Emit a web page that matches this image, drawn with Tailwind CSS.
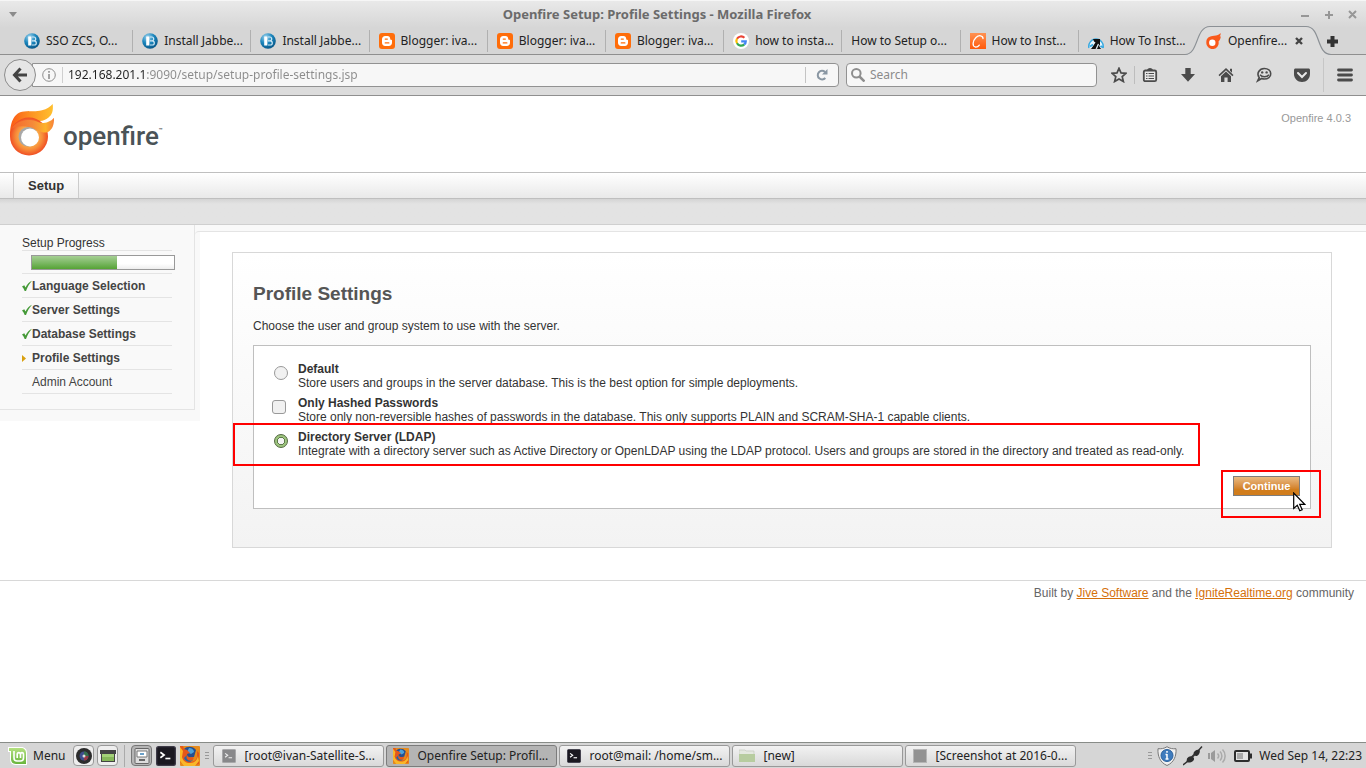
<!DOCTYPE html>
<html lang="en">
<head>
    <meta charset="UTF-8" />
    <meta name="viewport" content="width=device-width, initial-scale=1.0" />
    <title>Openfire Setup: Profile Settings</title>
    <script src="https://cdn.jsdelivr.net/npm/@tailwindcss/browser@4"></script>
</head>
<body class="min-h-screen flex flex-col bg-white font-['Noto_Sans',sans-serif] text-[12px] text-[#222] overflow-x-hidden">

    <!-- Shared icons -->
    <svg class="absolute size-0" aria-hidden="true">
        <defs>
            <radialGradient id="gBlue" cx=".35" cy=".25" r=".8"><stop offset="0" stop-color="#9fd4ee"/><stop offset=".5" stop-color="#1b86bd"/><stop offset="1" stop-color="#075485"/></radialGradient>
            <linearGradient id="gOrange" x1="0" y1="0" x2="0" y2="1"><stop offset="0" stop-color="#ff9252"/><stop offset="1" stop-color="#ff5a0a"/></linearGradient>
            <linearGradient id="gFlame" x1="0" y1="0" x2="1" y2="0"><stop offset="0" stop-color="#fb5a16"/><stop offset=".5" stop-color="#fd9422"/><stop offset="1" stop-color="#ffc02e"/></linearGradient>
            <linearGradient id="gFlame2" x1="0" y1="0" x2="1" y2="0"><stop offset="0" stop-color="#f4692a"/><stop offset=".5" stop-color="#f58a3a"/><stop offset=".8" stop-color="#fdb32c"/><stop offset="1" stop-color="#f7803a"/></linearGradient>
            <radialGradient id="gBall" cx=".5" cy=".5" r=".5"><stop offset=".45" stop-color="#fbb04c"/><stop offset=".7" stop-color="#f78c3a"/><stop offset="1" stop-color="#f04e23"/></radialGradient>
            <linearGradient id="gMint" x1="0" y1="0" x2="0" y2="1"><stop offset="0" stop-color="#b4e080"/><stop offset="1" stop-color="#69b53c"/></linearGradient>
        </defs>
        <symbol id="ico-b" viewBox="0 0 16 16"><circle cx="8" cy="8" r="7.8" fill="url(#gBlue)"/><path d="M4.2 3.500h3.200v9H4.200z" fill="#fff"/><path d="M8 4h1.800a1.800 1.800 0 0 1 0 3.800H8M8 7.800h2.200a2 2 0 0 1 0 4.200H8" fill="none" stroke="#cfe8f5" stroke-width="1.200"/></symbol>
        <symbol id="ico-blogger" viewBox="0 0 16 16"><rect width="16" height="16" rx="3" fill="#ff6d0a"/><path d="M6.200 3h2.200c1.800 0 2.800 1.200 2.800 2.700 0 .8.3 1.100 1 1.100.6 0 .8.3.8.8v2.200c0 1.900-1.200 3.200-3.200 3.200H6.200C4.300 13 3 11.700 3 9.800V6.200C3 4.300 4.300 3 6.200 3z" fill="#fff"/><path d="M6.300 6.100h2M6.300 9.900h3.500" stroke="#ff6d0a" stroke-width="1.400" stroke-linecap="round"/></symbol>
        <symbol id="ico-google" viewBox="0 0 16 16"><circle cx="8" cy="8" r="8" fill="#fff"/><g fill="none" stroke-width="2.200"><path d="M4 5.800A4.700 4.700 0 0 1 11.400 4.800" stroke="#ea4335"/><path d="M4.100 10.500A4.700 4.700 0 0 1 4 5.600" stroke="#fbbc05"/><path d="M11.300 11.400A4.700 4.700 0 0 1 4 10.300" stroke="#34a853"/><path d="M8.200 8.300h4.600c0 1.400-.6 2.500-1.500 3.200" stroke="#4285f4"/></g></symbol>
        <symbol id="ico-swirl" viewBox="0 0 16 16"><rect width="16" height="16" fill="url(#gOrange)"/><path d="M13 5.500C13 2.500 9 1.600 6 4.500 2.500 8 2 13.500 5.500 14c1.700.2 3-.8 3.800-1.900" fill="none" stroke="#fff" stroke-width="1.300" stroke-linecap="round"/></symbol>
        <symbol id="ico-howto" viewBox="0 0 16 16"><path d="M1 15A7.200 7.200 0 1 1 15 15" fill="#e8f6fd" stroke="#35a8e0" stroke-width="1.500"/><path d="M5 6h7v7l-2-2.500L7.500 16H3l4.500-6.500L6 8.500zM10.500 12l2.500 4h-4z" fill="#111"/><path d="M2 13.500l3-2M12.500 13l2.500 1.500" stroke="#35a8e0" stroke-width="2"/></symbol>
        <symbol id="ico-fire" viewBox="0 0 16 16"><path d="M.3 9.500C.3 4.500 4 3 8 2.800c3-.1 5-1 6.500-2.800.3 2.200-.3 3-1 3.600.6 0 .9-.2 1.300-.4-.2 2.500-1 4-2.300 5.200A6.200 6.200 0 1 1 .3 9.500z" fill="#f9591b"/><circle cx="6.300" cy="9.700" r="3.200" fill="#fff"/></symbol>
        <symbol id="ico-term" viewBox="0 0 16 16"><rect x=".5" y=".5" width="15" height="15" rx="1.500" fill="#1a1820" stroke="#3d3a47"/><path d="M3.500 5l3 2.200-3 2.200" fill="none" stroke="#fff" stroke-width="1.300"/><path d="M7.500 10h4" stroke="#fff" stroke-width="1.300"/></symbol>
        <symbol id="ico-term-dim" viewBox="0 0 16 16"><rect x=".5" y=".5" width="15" height="15" rx="1" fill="#88888a" stroke="#a5a5a7"/><path d="M3.500 5l3 2.200-3 2.200M7.500 10h4" fill="none" stroke="#eee" stroke-width="1.300"/></symbol>
        <symbol id="ico-firefox" viewBox="0 0 20 20"><rect width="20" height="20" rx="1" fill="#e58a1b"/><path d="M4 3c3-3 9-3 12 1l-2 7-8 1z" fill="#254f91"/><path d="M9 2c3 0 5 2 5 4l-3 2-4-2z" fill="#4da2d9"/><path d="M0 0h3l1 3 3 1 3 3-3 1c0 3 3 4 6 3 2 2-1 4-4 4 4 2 8-1 8-5V5l2 2v11l-6 2H5l-5-4z" fill="#e4571a"/><path d="M0 1l3 4-1 6c1 4 4 6 8 6 5 0 7-3 8-7l1 5-4 5H4L0 15z" fill="#f9b728"/><path d="M7 9c-2 4 2 7 6 5-2 3-8 2-9-2z" fill="#1f64aa"/></symbol>
    </svg>

    <!-- Window title bar -->
    <header class="h-7 shrink-0 flex items-center px-2 bg-linear-to-b from-[#e9e9e9] to-[#d6d6d6] border-t border-[#f6f6f6]">
        <svg class="w-10 h-2" viewBox="0 0 40 8"><path d="M1 1h8l-4 5z" fill="#8b8b8b"/></svg>
        <div class="flex-1 text-center font-bold text-[13px] text-[#6b6b6b] pr-8">Openfire Setup: Profile Settings - Mozilla Firefox</div>
        <svg class="w-15 h-3" viewBox="0 0 60 12" fill="none" stroke="#979797" stroke-width="2"><path d="M3 7h8M27 6h8M31 2v8M51 2l7 7M58 2l-7 7"/></svg>
    </header>

    <!-- Tabs -->
    <nav class="h-[27px] shrink-0 flex pl-[15px] pr-[51px] bg-[#d6d6d6] border-b border-[#8f8f8f] relative whitespace-nowrap">
        <a href="#" class="flex-1 min-w-0 flex items-center gap-[6px] pl-[9px]"><svg class="size-4 shrink-0"><use href="#ico-b"/></svg><span class="flex-1">SSO ZCS, O...</span><i class="w-px h-[22px] bg-[#b0b0b0]"></i></a>
        <a href="#" class="flex-1 min-w-0 flex items-center gap-[6px] pl-[9px]"><svg class="size-4 shrink-0"><use href="#ico-b"/></svg><span class="flex-1">Install Jabbe...</span><i class="w-px h-[22px] bg-[#b0b0b0]"></i></a>
        <a href="#" class="flex-1 min-w-0 flex items-center gap-[6px] pl-[9px]"><svg class="size-4 shrink-0"><use href="#ico-b"/></svg><span class="flex-1">Install Jabbe...</span><i class="w-px h-[22px] bg-[#b0b0b0]"></i></a>
        <a href="#" class="flex-1 min-w-0 flex items-center gap-[6px] pl-[9px]"><svg class="size-4 shrink-0"><use href="#ico-blogger"/></svg><span class="flex-1">Blogger: iva...</span><i class="w-px h-[22px] bg-[#b0b0b0]"></i></a>
        <a href="#" class="flex-1 min-w-0 flex items-center gap-[6px] pl-[9px]"><svg class="size-4 shrink-0"><use href="#ico-blogger"/></svg><span class="flex-1">Blogger: iva...</span><i class="w-px h-[22px] bg-[#b0b0b0]"></i></a>
        <a href="#" class="flex-1 min-w-0 flex items-center gap-[6px] pl-[9px]"><svg class="size-4 shrink-0"><use href="#ico-blogger"/></svg><span class="flex-1">Blogger: iva...</span><i class="w-px h-[22px] bg-[#b0b0b0]"></i></a>
        <a href="#" class="flex-1 min-w-0 flex items-center gap-[6px] pl-[9px]"><svg class="size-4 shrink-0"><use href="#ico-google"/></svg><span class="flex-1">how to insta...</span><i class="w-px h-[22px] bg-[#b0b0b0]"></i></a>
        <a href="#" class="flex-1 min-w-0 flex items-center gap-[6px] pl-[9px]"><span class="flex-1">How to Setup o...</span><i class="w-px h-[22px] bg-[#b0b0b0]"></i></a>
        <a href="#" class="flex-1 min-w-0 flex items-center gap-[6px] pl-[9px]"><svg class="size-4 shrink-0"><use href="#ico-swirl"/></svg><span class="flex-1">How to Inst...</span><i class="w-px h-[22px] bg-[#b0b0b0]"></i></a>
        <a href="#" class="flex-1 min-w-0 flex items-center gap-[6px] pl-[9px]"><svg class="size-4 shrink-0"><use href="#ico-howto"/></svg><span class="flex-1">How To Inst...</span></a>
        <a href="#" class="flex-1 min-w-0 flex items-center gap-[6px] pl-[9px] relative">
            <svg class="absolute -left-3 -top-[3px] w-[146px] h-[31px] max-w-none" viewBox="0 0 146 31"><path d="M0 29.500C14 29.500 10 1.500 25 1.500h96c15 0 10 28 25 28V31H0z" fill="#dcdcdc"/><path d="M0 29.500C14 29.500 10 1.500 25 1.500h96c15 0 10 28 25 28" fill="none" stroke="#8b9095" stroke-width="1.200"/></svg>
            <svg class="size-4 shrink-0 relative"><use href="#ico-fire"/></svg>
            <span class="flex-1 relative">Openfire...</span>
            <svg class="size-2 relative mr-3" viewBox="0 0 8 8"><path d="M1 1l6 6M7 1L1 7" stroke="#444" stroke-width="2.400"/></svg>
        </a>
        <button class="absolute right-7 top-2" aria-label="New tab"><svg class="size-[11px]" viewBox="0 0 11 11"><path d="M5.500 0v11M0 5.500h11" stroke="#333" stroke-width="4"/></svg></button>
    </nav>

    <!-- Navigation toolbar -->
    <div class="h-[41px] shrink-0 flex items-center pl-1 pr-[13px] bg-[#dcdcdc] border-b border-[#8f8f8f]">
        <button class="size-8 shrink-0 rounded-full border border-[#8c8c8c] bg-[#e6e6e6] flex items-center justify-center relative" aria-label="Back">
            <svg class="w-4 h-4" viewBox="0 0 16 16" fill="none" stroke="#444" stroke-width="3"><path d="M8.500 1.500L2.500 8l6 6.500M3 8h12"/></svg>
        </button>
        <div class="flex-1 -ml-1 h-6 flex items-center bg-[#f7f7f7] border border-[#929292] rounded-r-sm pl-[9px]">
            <svg class="size-[14px] shrink-0" viewBox="0 0 14 14" fill="none" stroke="#8e8e8e"><circle cx="7" cy="7" r="6.300"/><path d="M7 6v5M7 3v1.700" stroke-width="1.600"/></svg>
            <i class="w-px h-4 bg-[#cfcfcf] ml-[6px]"></i>
            <input type="text" aria-label="Address" value="192.168.201.1:9090/setup/setup-profile-settings.jsp" class="flex-1 ml-[5px] bg-[linear-gradient(to_right,#222_79px,#8b8b8b_79px)] bg-clip-text text-transparent outline-none" />
            <i class="w-px h-4 bg-[#c4c4c4]"></i>
            <button class="px-[10px]" aria-label="Reload"><svg class="size-3" viewBox="0 0 12 12"><path d="M9.300 9A4.300 4.300 0 1 1 9 3" fill="none" stroke="#8a97a3" stroke-width="2"/><path d="M11.500 0v5.500H6z" fill="#8a97a3"/></svg></button>
        </div>
        <div class="w-[251px] ml-[7px] h-6 flex items-center bg-[#f7f7f7] border border-[#929292] rounded-sm pl-1">
            <svg class="size-[14px] shrink-0" viewBox="0 0 14 14" fill="none" stroke="#8e8e8e"><circle cx="5.300" cy="5.300" r="4.300" stroke-width="2"/><path d="M8.500 8.500l5 5" stroke-width="2.500"/></svg>
            <input type="search" aria-label="Search" placeholder="Search" class="flex-1 min-w-0 ml-[5px] outline-none placeholder:text-[#8b8b8b]" />
        </div>
        <div class="flex items-center ml-[14px] text-[#4b4b4b]">
            <button aria-label="Bookmark"><svg class="size-4" viewBox="0 0 16 16"><path d="M8 1.300l2 4.600 5 .4-3.800 3.300 1.200 4.900L8 11.900l-4.400 2.600 1.200-4.900L1 6.300l5-.4z" fill="none" stroke="currentColor" stroke-width="1.700"/></svg></button>
            <i class="w-px h-[18px] bg-[#bdbdbd] ml-[7px] mr-[7px]"></i>
            <button aria-label="Bookmarks list"><svg class="size-4" viewBox="0 0 16 16"><path d="M5 3.500C5 0 11 0 11 3.500" fill="currentColor"/><rect x="1.800" y="3.500" width="12.400" height="10.700" rx="1.500" fill="#e8e8e8" stroke="currentColor" stroke-width="1.800"/><path d="M4 6.500h1.500M6.500 6.500h5.500M4 9h1.500M6.500 9h5.500M4 11.500h1.500M6.500 11.500h5.500" stroke="currentColor" stroke-width="1.200"/></svg></button>
            <button class="ml-[22px]" aria-label="Downloads"><svg class="size-4" viewBox="0 0 16 16"><path d="M5.300 1h5.400v6H15l-7 7.800L1 7h4.300z" fill="currentColor"/></svg></button>
            <button class="ml-[22px]" aria-label="Home"><svg class="size-4" viewBox="0 0 16 16" fill="currentColor"><path d="M8 1l7.500 7-1.100 1.200L8 3.300 1.600 9.200.5 8zM12 1.800h2v4l-2-2z"/><path d="M3 9.200L8 4.600l5 4.600V15H9.600v-4.500H6.400V15H3z"/></svg></button>
            <button class="ml-[22px]" aria-label="Chat"><svg class="size-4" viewBox="0 0 16 16"><path d="M8.300 1.500c3.700 0 6.400 2.200 6.400 5.300s-2.700 5.200-6.400 5.200c-1 0-1.900-.2-2.600-.5L1.700 13.800l1.500-3.300C.2 6.500 3.300 1.500 8.300 1.500z" fill="none" stroke="currentColor" stroke-width="1.600"/><circle cx="6.200" cy="5.400" r="1.200" fill="currentColor"/><circle cx="10.600" cy="5.400" r="1.200" fill="currentColor"/><path d="M4 7.800c2 2.600 7 2.600 9 0" fill="none" stroke="currentColor" stroke-width="1.500"/></svg></button>
            <button class="ml-[22px]" aria-label="Pocket"><svg class="size-4" viewBox="0 0 16 16"><path d="M1.500 1.500h13c.8 0 1.500.6 1.500 1.500v4c0 4.500-3.500 8-8 8S0 11.500 0 7V3c0-.9.700-1.500 1.500-1.500z" fill="currentColor"/><path d="M4 6l4 4 4-4" fill="none" stroke="#e8e8e8" stroke-width="2" stroke-linecap="round"/></svg></button>
            <i class="w-px h-[34px] bg-[#c6c6c6] mx-[13px]"></i>
            <button aria-label="Menu"><svg class="size-4" viewBox="0 0 16 16"><path d="M1.500 3h13M1.500 8h13M1.500 13h13" stroke="currentColor" stroke-width="2.800" stroke-linecap="round"/></svg></button>
        </div>
    </div>

    <!-- Openfire page -->
    <div class="flex-1 font-['Liberation_Sans',sans-serif] text-[12px] leading-[14px] text-[#333]">
        <div class="h-[76px] flex justify-between pl-[10px] pr-[15px]">
            <div class="flex items-start pt-2">
                <svg class="w-[46px] h-[52px]" viewBox="0 0 46 52">
                    <path d="M0 32C0 20 3 8.500 14 7.500c7-.6 12 .3 18-1.200C37 5 40 3 42.700 0c.8 7-.7 11-4.400 13.700C36 15.500 33 17 30 17L10 34z" fill="url(#gFlame)"/>
                    <circle cx="19" cy="32.500" r="19" fill="url(#gBall)"/>
                    <path d="M1.500 25C5 18.500 12 16 20 16c6 0 8 3 12 3s9-1.500 12-5.300c.3 7-1.500 11.500-6 14.300-6 2-10-2-18-4.500C13 21.500 6 22 1.500 25z" fill="url(#gFlame2)"/>
                    <circle cx="18.300" cy="32.800" r="9.800" fill="#a8a8a8"/>
                    <circle cx="20" cy="33.500" r="9" fill="#fff"/>
                </svg>
                <div class="flex items-start pt-[14px] pl-[7px] text-[#4a5357]">
                    <span class="font-['Roboto',sans-serif] font-medium text-[26px] leading-[36px]">openfire</span>
                    <span class="font-['Roboto',sans-serif] font-bold text-[6px] leading-[24px]">™</span>
                </div>
            </div>
            <span class="text-[11px] text-[#999] pt-[15px]">Openfire 4.0.3</span>
        </div>
        <div class="h-[27px] flex pl-[13px] border-y border-[#bfbfbf] bg-linear-to-b from-white to-[#e9e9e9]">
            <a href="#" class="flex items-center px-[14px] border-x border-[#ccc] bg-linear-to-b from-white to-[#eee] font-bold text-[13px]">Setup</a>
        </div>
        <div class="h-[26px] border-b border-[#cfcfcf] bg-linear-to-b from-[#d4d4d4] from-0% via-[#e3e3e3] via-20% to-[#e3e3e3]"></div>

        <div class="flex items-start bg-[linear-gradient(#f9f9f9_6px,transparent_6px)]">
            <!-- Setup steps -->
            <aside class="w-[200px] shrink-0 bg-[#f9f9f9] pb-[11px]">
                <div class="w-[195px] border-r border-b border-[#e4e4e4] pl-[22px] pr-[22px] pt-[11px] pb-[15px]">
                    <div class="border-b border-[#e4e4e4]">Setup Progress</div>
                    <div class="h-[23px] pt-1 pl-[9px] border-b border-[#e4e4e4]">
                        <div class="w-[144px] h-[15px] border border-[#999] bg-linear-to-b from-white from-60% to-[#eee]">
                            <div class="h-full bg-linear-to-b from-[#a5cf93] to-[#55a333]" style="width: 60%"></div>
                        </div>
                    </div>
                    <ul class="font-bold text-[#444]">
                        <li class="h-6 flex items-center border-b border-[#e4e4e4]"><svg class="w-[10px] h-3" viewBox="0 0 10 12"><path d="M0 6.500l2.300-1.300 1.200 2.300C5 4.500 7.500 1.800 10 .8 7.500 3.500 5.500 7 4 11H2.700C2 9.300 1.200 7.700 0 6.500z" fill="#459a38"/></svg>Language Selection</li>
                        <li class="h-6 flex items-center border-b border-[#e4e4e4]"><svg class="w-[10px] h-3" viewBox="0 0 10 12"><path d="M0 6.500l2.300-1.300 1.200 2.300C5 4.500 7.500 1.800 10 .8 7.500 3.500 5.500 7 4 11H2.700C2 9.300 1.200 7.700 0 6.500z" fill="#459a38"/></svg>Server Settings</li>
                        <li class="h-6 flex items-center border-b border-[#e4e4e4]"><svg class="w-[10px] h-3" viewBox="0 0 10 12"><path d="M0 6.500l2.300-1.300 1.200 2.300C5 4.500 7.500 1.800 10 .8 7.500 3.500 5.500 7 4 11H2.700C2 9.300 1.200 7.700 0 6.500z" fill="#459a38"/></svg>Database Settings</li>
                        <li class="h-6 flex items-center border-b border-[#e4e4e4]"><svg class="w-[10px] h-3" viewBox="0 0 10 12"><path d="M0 3l4 3.500-4 3.500z" fill="#d9a010"/></svg>Profile Settings</li>
                        <li class="h-6 flex items-center border-b border-[#e4e4e4] pl-[10px] font-normal">Admin Account</li>
                    </ul>
                </div>
            </aside>

            <main class="flex-1 -ml-[5px] mt-[6px] border-t border-[#e4e4e4] rounded-tl-sm pl-[37px] pr-[34px] pt-5">
                <div class="border border-[#d8d8d8] bg-linear-to-b from-white to-[#f3f3f3] p-5 pb-[38px]">
                    <h1 class="font-bold text-[19px] leading-6 text-[#555] mt-[9px]">Profile Settings</h1>
                    <p class="mt-[13px] mb-3">Choose the user and group system to use with the server.</p>

                    <form class="border border-[#bfbfbf] bg-white pt-4 pl-[18px] pr-[10px] pb-3">
                        <div class="flex mb-[6px]">
                            <input type="radio" name="mode" id="default" class="appearance-none size-[14px] shrink-0 rounded-full border border-[#999] bg-[#f1f1f1] mt-1 ml-[2px] mr-[10px]" />
                            <label for="default"><b>Default</b><br />Store users and groups in the server database. This is the best option for simple deployments.</label>
                        </div>
                        <div class="flex mb-[6px]">
                            <input type="checkbox" id="hashed" class="appearance-none size-[14px] shrink-0 rounded-[3px] border border-[#999] bg-[#f1f1f1] mt-1 mr-3" />
                            <label for="hashed"><b>Only Hashed Passwords</b><br />Store only non-reversible hashes of passwords in the database. This only supports PLAIN and SCRAM-SHA-1 capable clients.</label>
                        </div>
                        <div class="flex relative w-fit">
                            <input type="radio" name="mode" id="ldap" checked class="appearance-none size-[14px] shrink-0 rounded-full border border-[#52683f] bg-[radial-gradient(circle,#f4f4f4_3px,#5f7a4c_3px,#5f7a4c_4px,#9dc47e_4px)] mt-1 ml-[2px] mr-[10px]" />
                            <label for="ldap"><b>Directory Server (LDAP)</b><br />Integrate with a directory server such as Active Directory or OpenLDAP using the LDAP protocol. Users and groups are stored in the directory and treated as read-only.</label>
                            <div class="absolute -left-[39px] -right-4 -top-[7px] -bottom-2 border-2 border-[#f00] pointer-events-none"></div>
                        </div>
                        <div class="flex justify-end mt-[18px]">
                            <div class="relative">
                                <button type="button" class="block w-[67px] h-5 border border-[#7d7d7d] bg-linear-to-b from-[#e9ba80] to-[#d17d1c] to-70% font-bold text-[11px] leading-[18px] text-white">Continue</button>
                                <div class="absolute -left-3 -right-[21px] -top-[6px] -bottom-[22px] border-2 border-[#f00] pointer-events-none"></div>
                                <svg class="absolute -right-[6px] top-4 w-[13px] h-5" viewBox="0 0 13 20"><path d="M.7 1v15.500l3.600-3.300 2.500 5.500 2.400-1-2.500-5.400h5z" fill="#fff" stroke="#000" stroke-width="1.200"/></svg>
                            </div>
                        </div>
                    </form>
                </div>
            </main>
        </div>

        <footer class="mt-8 border-t border-[#d8d8d8] pt-[5px] pr-3 text-right text-[#666]">
            Built by <a href="#" class="text-[#d5700a] underline">Jive Software</a> and the <a href="#" class="text-[#d5700a] underline">IgniteRealtime.org</a> community
        </footer>
    </div>

    <!-- Desktop panel -->
    <div class="h-[26px] shrink-0 flex items-center pl-2 pr-1 bg-[#d6d6d6] border-t border-[#888c88] whitespace-nowrap">
        <button class="flex items-center gap-[6px]">
            <svg class="w-[19px] h-[18px]" viewBox="0 0 19 18"><path d="M0 0h13c4 0 6 2.500 6 6v12H8c-4 0-6-2-6-6V5H0z" fill="#fff"/><path d="M1 1h12c3 0 5 2 5 5v11H8c-3 0-5-2-5-5V4H1z" fill="url(#gMint)"/><path d="M6 4v7c0 2 1 3 3 3h3.500c2 0 3-1 3-3V7.500c0-2.500-3-2.500-3 0V11M12.500 7.500c0-2.500-3.300-2.500-3.300 0V11" fill="none" stroke="#fff" stroke-width="1.600"/></svg>
            Menu
        </button>
        <button class="ml-2 size-[21px] rounded-sm border border-[#999] bg-[#eee] flex items-center justify-center" aria-label="Camera"><svg class="size-4" viewBox="0 0 16 16"><circle cx="8" cy="8" r="8" fill="#2c2c2c"/><circle cx="8" cy="8" r="4.500" fill="#3f4d8c"/><path d="M8 8V3.500A4.500 4.500 0 0 1 12.500 8z" fill="#35704b"/><path d="M8 8h4.500A4.500 4.500 0 0 1 8 12.500z" fill="#9a3844"/><circle cx="8" cy="8" r="1.500" fill="#ddd"/></svg></button>
        <button class="ml-[3px] size-[21px] rounded-sm border border-[#999] bg-[#eee] flex items-center justify-center" aria-label="Show desktop"><svg class="size-4" viewBox="0 0 16 16"><path d="M0 2h16v4h-1v8H1V6H0z" fill="#444"/><path d="M2 6h12v7H2z" fill="#86b85a"/><path d="M2 6h12v3H2z" fill="#a3d178"/></svg></button>
        <i class="w-px h-[22px] bg-[#f2f2f2] border-l border-[#aaa] mx-[6px]"></i>
        <button class="size-[21px] rounded-sm border border-[#777] bg-[#b5b5b5] flex items-center justify-center" aria-label="Files"><svg class="size-4" viewBox="0 0 16 16"><rect x="1" y=".5" width="14" height="15" rx="1" fill="#ddd" stroke="#666"/><path d="M3 3h10v6H3z" fill="#fff" stroke="#777"/><path d="M6 5h4v2H6z" fill="#6aa0c8"/><path d="M5 12h6" stroke="#666" stroke-width="2"/></svg></button>
        <button class="ml-1" aria-label="Terminal"><svg class="size-5"><use href="#ico-term"/></svg></button>
        <button class="ml-1" aria-label="Firefox"><svg class="size-5"><use href="#ico-firefox"/></svg></button>
        <svg class="w-1 h-2 ml-[5px] mr-1 shrink-0" viewBox="0 0 4 8"><path d="M0 .5h4M0 3.500h4M0 6.500h4" stroke="#999"/></svg>

        <div class="flex gap-[2px] text-left">
            <button class="w-[171px] h-[22px] flex items-center gap-2 pl-2 rounded-[3px] border border-[#999] bg-linear-to-b from-[#f2f2f2] to-[#d9d9d9]"><svg class="size-[14px]"><use href="#ico-term-dim"/></svg>[root@ivan-Satellite-S...</button>
            <button class="w-[171px] h-[22px] flex items-center gap-2 pl-[6px] rounded-[3px] border border-[#7c7c7c] bg-[#b4b4b4]"><svg class="size-4"><use href="#ico-firefox"/></svg>Openfire Setup: Profil...</button>
            <button class="w-[171px] h-[22px] flex items-center gap-2 pl-[7px] rounded-[3px] border border-[#999] bg-linear-to-b from-[#f2f2f2] to-[#d9d9d9]"><svg class="size-[14px]"><use href="#ico-term"/></svg>root@mail: /home/sm...</button>
            <button class="w-[171px] h-[22px] flex items-center gap-2 pl-[6px] rounded-[3px] border border-[#999] bg-linear-to-b from-[#f2f2f2] to-[#d9d9d9]"><svg class="size-4" viewBox="0 0 16 16"><path d="M0 2h6l1 1h8v5H0z" fill="#e4e8df" stroke="#c4c8bf" stroke-width=".7"/><path d="M0 6h16v8H0z" fill="#b7cc9f"/></svg>[new]</button>
            <button class="w-[171px] h-[22px] flex items-center gap-2 pl-[7px] rounded-[3px] border border-[#999] bg-linear-to-b from-[#f2f2f2] to-[#d9d9d9]"><svg class="size-[14px]" viewBox="0 0 14 14"><rect x=".5" y=".5" width="13" height="13" fill="#929292" stroke="#b5b5b5"/></svg>[Screenshot at 2016-0...</button>
        </div>

        <div class="ml-auto flex items-center">
            <svg class="w-1 h-2" viewBox="0 0 4 8"><path d="M0 .5h4M0 3.500h4M0 6.500h4" stroke="#999"/></svg>
            <svg class="size-5 ml-[5px]" viewBox="0 0 20 20"><path d="M10 .7c3 2 6 2.300 9 2C19.500 10 17 16.500 10 19.500 3 16.500.5 10 1 2.700c3 .3 6 0 9-2z" fill="#f0f0f0" stroke="#777"/><circle cx="10" cy="9.500" r="6" fill="#3e7bbd" stroke="#295f9c"/><path d="M10 8v5.500M8.500 8.500H10M8.500 13h3M10 5v1.800" stroke="#fff" stroke-width="1.500"/></svg>
            <svg class="size-5 ml-[6px]" viewBox="0 0 20 20"><path d="M0 19l5-4M15 5l4-4.500" stroke="#333" stroke-width="1.500"/><path d="M4 12.500c2-2.500 4-3 6-1.500s1 4-1.500 5-4.500.5-5-.5zM10.500 7c1-2.500 3.500-4 6-3 1 1.500 0 4.500-2.500 6-2 .5-3.500-1-3.500-3z" fill="#2e2e2e"/><path d="M8.500 11.500l3-3" stroke="#333" stroke-width="2"/></svg>
            <svg class="w-[18px] h-4 ml-[5px]" viewBox="0 0 18 16"><path d="M0 5h2v6H0zM3 5l4-3v12l-4-3z" fill="#9a9a9a"/><path d="M9.500 5.500c1.500 1.500 1.500 3.500 0 5M12 3.500c2.500 2.500 2.500 6.500 0 9M14.500 1.500c3.500 3.500 3.500 9.500 0 13" fill="none" stroke="#aaa" stroke-width="1.500"/></svg>
            <svg class="w-[18px] h-3 ml-2" viewBox="0 0 18 12"><rect x="1" y="1" width="14" height="10" rx="1" fill="#e4e4e4" stroke="#2d2d2d" stroke-width="2"/><path d="M3 3h6v6H3z" fill="#aaa"/><path d="M15.500 3.500H18v5h-2.500z" fill="#2d2d2d"/></svg>
            <span class="ml-[7px]">Wed Sep 14, 22:23</span>
        </div>
    </div>

</body>
</html>
